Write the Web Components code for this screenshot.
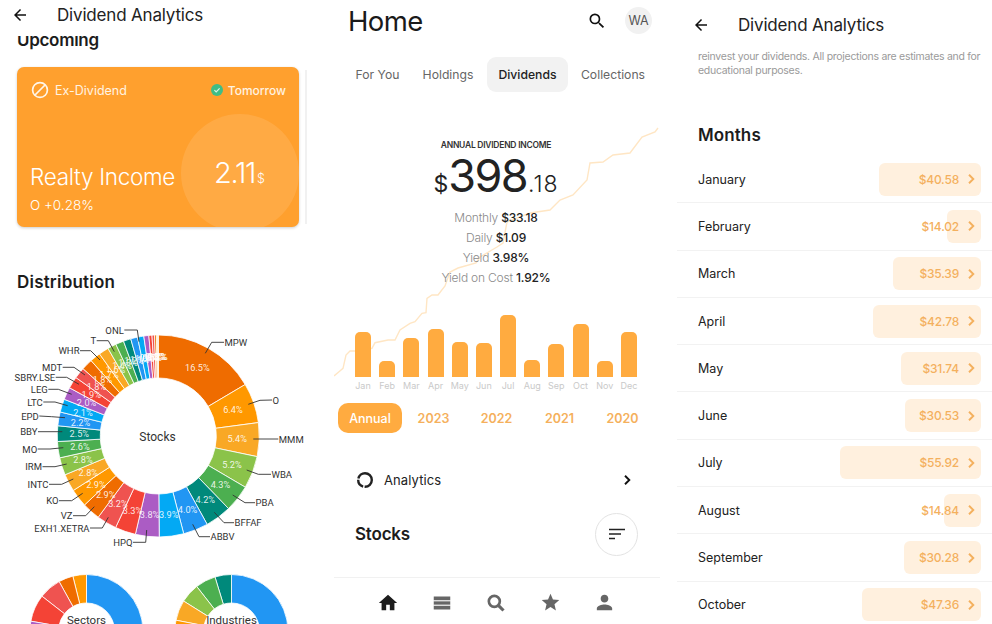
<!DOCTYPE html>
<html lang="en">
<head>
<meta charset="utf-8">
<title>Dividend Analytics</title>
<style>
  html, body { margin: 0; background: #fff; }
  body { font-family: Inter, "Noto Sans", sans-serif; color: #1c1c1c; width: 992px; height: 624px; overflow: hidden; }
  #screens { display: grid; grid-template-columns: 334px 343px 315px; height: 624px; }
</style>
</head>
<body>
<div id="screens">
  <phone-screen>
    <top-bar title="Dividend Analytics" pad="11" gap="28" height="36" drop="6"></top-bar>
    <scroll-clip offset="-4" height="588">
      <section-title style="--x:17px; --y:0px">Upcoming</section-title>
      <upcoming-card></upcoming-card>
      <section-title style="--x:17px; --y:47px; --ls:.2px">Distribution</section-title>
      <stock-donut></stock-donut>
      <mini-donuts></mini-donuts>
    </scroll-clip>
  </phone-screen>

  <phone-screen>
    <home-header></home-header>
    <home-tabs></home-tabs>
    <income-panel></income-panel>
    <year-tabs></year-tabs>
    <analytics-row></analytics-row>
    <stocks-header></stocks-header>
    <bottom-nav></bottom-nav>
  </phone-screen>

  <phone-screen>
    <top-bar title="Dividend Analytics" pad="15" gap="28" height="46" offset="4"></top-bar>
    <months-panel></months-panel>
  </phone-screen>
</div>

<script>
/**
 * Shared icons
 */
const ICONS = {
  back: '<path d="M20 11H7.83l5.59-5.59L12 4l-8 8 8 8 1.41-1.41L7.83 13H20v-2z"/>',
  search: '<path d="M15.5 14h-.79l-.28-.27A6.47 6.47 0 0 0 16 9.5 6.5 6.5 0 1 0 9.5 16c1.61 0 3.09-.59 4.23-1.57l.27.28v.79l5 4.99L20.49 19l-4.99-5zm-6 0C7.01 14 5 11.99 5 9.5S7.01 5 9.5 5 14 7.01 14 9.5 11.99 14 9.5 14z"/>',
  searchBold: '<circle cx="10" cy="10" r="6.6" fill="none" stroke="#666" stroke-width="3.2"/><path d="M14.8 14.8 21 21" fill="none" stroke="#666" stroke-width="3.8"/>',
  home: '<path d="M10 20v-6h4v6h5v-8h3L12 3 2 12h3v8z"/>',
  star: '<path d="M12 17.27L18.18 21l-1.64-7.03L22 9.24l-7.19-.61L12 2 9.19 8.63 2 9.24l5.46 4.73L5.82 21z"/>',
  person: '<path d="M12 12c2.21 0 4-1.79 4-4s-1.79-4-4-4-4 1.79-4 4 1.79 4 4 4zm0 2c-2.67 0-8 1.34-8 4v2h16v-2c0-2.66-5.33-4-8-4z"/>',
  rows: '<path d="M3 5h18v4H3zM3 10h18v4H3zM3 15h18v4H3z"/><path d="M3 9.5h18M3 14.5h18" stroke="#ddd"/>'
};

function icon(name, size, color) {
  return `<svg width="${size}" height="${size}" viewBox="0 0 24 24" fill="${color}" style="display:block">${ICONS[name]}</svg>`;
}

function chevron(color, size) {
  return `<svg width="${size}" height="${size}" viewBox="0 0 12 12" fill="none" stroke="${color}" stroke-width="1.9" style="display:block"><path d="M4 1.8 8.3 6 4 10.2"/></svg>`;
}

/**
 * Layout helpers
 */
class PhoneScreen extends HTMLElement {
  constructor() {
    super();
    this.attachShadow({ mode: 'open' });
    this.shadowRoot.innerHTML = `
      <style>:host { display: block; height: 624px; overflow: hidden; position: relative; background: #fff; }</style>
      <slot></slot>`;
  }
}

class ScrollClip extends HTMLElement {
  connectedCallback() {
    const root = this.attachShadow({ mode: 'open' });
    root.innerHTML = `
      <style>
        :host { display: block; overflow: hidden; height: ${this.getAttribute('height')}px; }
        div { margin-top: ${this.getAttribute('offset')}px; }
      </style>
      <div><slot></slot></div>`;
  }
}

class TopBar extends HTMLElement {
  connectedCallback() {
    const pad = this.getAttribute('pad');
    const gap = this.getAttribute('gap');
    const height = this.getAttribute('height');
    const offset = this.getAttribute('offset') || 0;
    const drop = this.getAttribute('drop') || 0;
    const root = this.attachShadow({ mode: 'open' });
    root.innerHTML = `
      <style>
        :host { display: flex; align-items: center; height: ${height}px; padding: ${offset}px 0 ${drop}px ${pad}px; box-sizing: border-box; gap: ${gap}px; }
        span { font-size: 17px; font-weight: 400; color: #222; letter-spacing: -.18px; }
      </style>
      ${icon('back', 18, '#111')}
      <span>${this.getAttribute('title')}</span>`;
  }
}

class SectionTitle extends HTMLElement {
  constructor() {
    super();
    this.attachShadow({ mode: 'open' });
    this.shadowRoot.innerHTML = `
      <style>
        :host { display: block; padding: var(--y) 0 0 var(--x); font-size: 17px; font-weight: 600; line-height: 16px; color: #1c1c1c; letter-spacing: var(--ls, -.3px); }
      </style>
      <slot></slot>`;
  }
}

/**
 * First screen
 */
class UpcomingCard extends HTMLElement {
  constructor() {
    super();
    this.attachShadow({ mode: 'open' });
    this.shadowRoot.innerHTML = `
      <style>
        :host { display: block; margin: 19px 0 0 17px; width: 289px; height: 160px; position: relative; }
        .card { position: relative; width: 282px; height: 160px; border-radius: 7px; background: #ffa02e; color: #fff; overflow: hidden; box-shadow: 0 1px 3px rgba(0,0,0,.2); }
        .next { position: absolute; left: 288px; top: 3px; width: 2px; height: 154px; background: #f1f1f1; }
        .bubble { position: absolute; left: 164px; top: 47px; width: 118px; height: 118px; border-radius: 50%; background: rgba(255,255,255,.11); }
        .head { position: relative; display: flex; align-items: center; justify-content: space-between; padding: 12px 13px 0 14px; font-size: 12.5px; color: #fff3e2; height: 22px; }
        .left, .right { display: flex; align-items: center; }
        .left { gap: 6px; }
        .right { gap: 5px; font-weight: 500; font-size: 12px; }
        .name { position: absolute; left: 13px; top: 96px; font-size: 22.5px; font-weight: 300; letter-spacing: -.3px; }
        .ticker { position: absolute; left: 13px; top: 130px; font-size: 13.5px; font-weight: 300; }
        .value { position: absolute; left: 197px; top: 88px; font-size: 29px; font-weight: 300; letter-spacing: -1.3px; }
        .value small { font-size: 12.5px; letter-spacing: 0; margin-left: 2px; }
      </style>
      <div class="card">
        <div class="bubble"></div>
        <div class="head">
          <div class="left">
            <svg width="18" height="18" viewBox="0 0 18 18" fill="none" stroke="#fff6ea" stroke-width="1.7"><circle cx="9" cy="9" r="7.4"/><path d="M4 14 14 4"/></svg>
            <span>Ex-Dividend</span>
          </div>
          <div class="right">
            <svg width="12" height="12" viewBox="0 0 12 12"><circle cx="6" cy="6" r="6" fill="#3fbd86"/><path d="M3.4 6.2 5.2 8l3.4-3.6" fill="none" stroke="#d8f5e6" stroke-width="1.2"/></svg>
            <span>Tomorrow</span>
          </div>
        </div>
        <div class="name">Realty Income</div>
        <div class="ticker">O +0.28%</div>
        <div class="value">2.11<small>$</small></div>
      </div>
      <div class="next"></div>`;
  }
}

const SLICE_COLORS = ['#ef6c00', '#ff9800', '#f9a825', '#8bc34a', '#4caf50', '#00897b', '#2196f3', '#03a9f4', '#ab5cc4', '#f44336', '#ef5350'];
const STOCK_SLICES = [16.5, 6.4, 5.4, 5.2, 4.3, 4.2, 4.0, 3.9, 3.8, 3.3, 3.2, 2.9, 2.9, 2.8, 2.8, 2.6, 2.5, 2.2, 2.1, 2.0, 1.9, 1.8, 1.8, 1.7, 1.6, 1.4, 1.3, 1.2, 1.1, 1.0, 0.8, 0.5, 0.4, 0.3, 0.2, 0.1];

// name, anchor side, then the leader polyline as page coordinates
const STOCK_LABELS = [
  ['MPW', 'start', [[205.3, 353.3], [211.7, 342.3], [224, 342.3]]],
  ['O', 'start', [[248.3, 404.3], [260, 400.3], [272, 400]]],
  ['MMM', 'start', [[253.3, 439], [278.3, 439]]],
  ['WBA', 'start', [[246.7, 470], [258.3, 474.3], [271, 474.3]]],
  ['PBA', 'start', [[232.7, 495], [245, 502.7], [255, 502.7]]],
  ['BFFAF', 'start', [[214.3, 512.3], [224, 522.7], [234, 522.7]]],
  ['ABBV', 'start', [[192.7, 524.3], [199, 536.7], [210, 536.7]]],
  ['HPQ', 'end', [[146.7, 530], [145.7, 542.3], [133, 542.3]]],
  ['EXH1.XETRA', 'end', [[108.3, 517.3], [102.3, 528], [90, 528]]],
  ['VZ', 'end', [[94.3, 506.7], [85.7, 515.7], [73, 515.7]]],
  ['KO', 'end', [[82.7, 493.3], [71.7, 500.7], [59, 500.7]]],
  ['INTC', 'end', [[73.3, 479], [61.7, 484.3], [49, 484.3]]],
  ['IRM', 'end', [[66.7, 464], [55, 466.7], [42.5, 466.7]]],
  ['MO', 'end', [[63.3, 447.7], [50, 449], [37.7, 449]]],
  ['BBY', 'end', [[62.3, 431.7], [38, 431.7]]],
  ['EPD', 'end', [[65, 417.7], [51.7, 416.7], [39.3, 416]]],
  ['LTC', 'end', [[67.7, 405.7], [55, 402], [43.3, 402]]],
  ['LEG', 'end', [[71.7, 394.3], [58.3, 389.3], [48.3, 389.3]]],
  ['SBRY.LSE', 'end', [[79, 384.3], [66.7, 377.3], [55.7, 377.3]]],
  ['MDT', 'end', [[85, 375], [74, 367.3], [62.7, 367.3]]],
  ['WHR', 'end', [[100, 360], [90.7, 350.7], [80, 350.7]]],
  ['T', 'end', [[114.3, 351.7], [108.3, 340.7], [96.7, 340.7]]],
  ['ONL', 'end', [[139, 341.7], [137.3, 330], [124.3, 330]]]
];

function ringSlice(cx, cy, outer, inner, fromDeg, toDeg) {
  const p = (r, deg) => {
    const a = deg * Math.PI / 180;
    return `${(cx + r * Math.sin(a)).toFixed(2)} ${(cy - r * Math.cos(a)).toFixed(2)}`;
  };
  const large = toDeg - fromDeg > 180 ? 1 : 0;
  return `M${p(outer, fromDeg)}A${outer} ${outer} 0 ${large} 1 ${p(outer, toDeg)}L${p(inner, toDeg)}A${inner} ${inner} 0 ${large} 0 ${p(inner, fromDeg)}Z`;
}

class StockDonut extends HTMLElement {
  constructor() {
    super();
    this.attachShadow({ mode: 'open' });
    const cx = 158.3, cy = 436, outer = 101, inner = 58;
    let start = 0, paths = '', texts = '';
    const total = STOCK_SLICES.reduce((a, b) => a + b, 0);
    STOCK_SLICES.forEach((pct, i) => {
      const end = start + pct / total * 360;
      const mid = (start + end) / 2 * Math.PI / 180;
      paths += `<path d="${ringSlice(cx, cy, outer, inner, start, end)}" fill="${SLICE_COLORS[i % SLICE_COLORS.length]}" stroke="#fff" stroke-width=".8"/>`;
      texts += `<text x="${(cx + 79 * Math.sin(mid)).toFixed(1)}" y="${(cy - 79 * Math.cos(mid) + 3.3).toFixed(1)}" text-anchor="middle" class="pct">${pct.toFixed(1)}%</text>`;
      start = end;
    });
    const labels = STOCK_LABELS.map(([name, side, pts]) => {
      const last = pts[pts.length - 1];
      const x = side === 'start' ? last[0] + 0.5 : last[0] - 0.5;
      return `<polyline points="${pts.map(p => p.join(',')).join(' ')}" fill="none" stroke="#333" stroke-width=".9"/>
        <text x="${x}" y="${last[1] + 3.5}" text-anchor="${side}" class="name">${name}</text>`;
    }).join('');
    this.shadowRoot.innerHTML = `
      <style>
        :host { display: block; height: 243px; margin-top: 32px; }
        svg { display: block; }
        text { font-family: Roboto, sans-serif; }
        .pct { font-size: 9.2px; fill: #fff; fill-opacity: .88; }
        .name { font-size: 9.5px; fill: #333; }
        .center { font-size: 12px; fill: #333; }
      </style>
      <svg width="334" height="243" viewBox="0 322 334 243">
        ${paths}${texts}${labels}
        <text x="157.5" y="440.5" text-anchor="middle" class="center">Stocks</text>
      </svg>`;
  }
}

class MiniDonut extends HTMLElement {
  connectedCallback() {
    // slices run anticlockwise from twelve o'clock, "colour:degrees"
    const left = this.getAttribute('left').split(',').map(s => s.split(':'));
    const cx = 72.5, cy = 57, outer = 56.5, inner = 28;
    let paths = `<path d="${ringSlice(cx, cy, outer, inner, 0, 180)}" fill="#2196f3" stroke="#fff" stroke-width=".8"/>`;
    let from = 360;
    left.forEach(([color, deg]) => {
      const to = from - Number(deg);
      paths += `<path d="${ringSlice(cx, cy, outer, inner, to, from)}" fill="${color}" stroke="#fff" stroke-width=".8"/>`;
      from = to;
    });
    const root = this.attachShadow({ mode: 'open' });
    root.innerHTML = `
      <style>
        :host { display: block; width: 145px; height: 70px; }
        svg { display: block; }
        text { font-family: Roboto, sans-serif; font-size: 11.5px; fill: #333; }
      </style>
      <svg width="145" height="70" viewBox="0 0 145 70">
        ${paths}
        <text x="72.5" y="50" text-anchor="middle">${this.getAttribute('label')}</text>
      </svg>`;
  }
}

class MiniDonuts extends HTMLElement {
  constructor() {
    super();
    this.attachShadow({ mode: 'open' });
    this.shadowRoot.innerHTML = `
      <style>:host { display: flex; padding: 9px 0 0 13.5px; }</style>
      <mini-donut label="Sectors" left="#ff9800:14,#ef6c00:15,#ef5350:23,#f44336:28,#ab5cc4:6,#03a9f4:94"></mini-donut>
      <mini-donut label="Industries" left="#00897b:17,#4caf50:21,#8bc34a:20,#f9a825:21,#ff9800:5,#ef6c00:96"></mini-donut>`;
  }
}

/**
 * Home screen
 */
class HomeHeader extends HTMLElement {
  constructor() {
    super();
    this.attachShadow({ mode: 'open' });
    this.shadowRoot.innerHTML = `
      <style>
        :host { display: flex; align-items: center; height: 41px; padding: 0 25px 0 14px; }
        h1 { margin: 0; flex: 1; font-size: 27.5px; font-weight: 400; color: #1a1a1a; letter-spacing: -.6px; }
        .search { margin-right: 18px; }
        .avatar { width: 27px; height: 27px; border-radius: 50%; background: #f1f1f1; color: #555; font-size: 12.5px; display: flex; align-items: center; justify-content: center; }
      </style>
      <h1>Home</h1>
      <div class="search">${icon('search', 20, '#111')}</div>
      <div class="avatar">WA</div>`;
  }
}

class HomeTabs extends HTMLElement {
  constructor() {
    super();
    this.attachShadow({ mode: 'open' });
    this.shadowRoot.innerHTML = `
      <style>
        :host { display: grid; grid-template-columns: 63px 78px 81px 90px; margin-top: 16px; padding-left: 12px; height: 35px; font-size: 12.2px; color: #666; }
        div { display: flex; align-items: center; justify-content: center; white-space: nowrap; }
        .on { background: #f2f2f2; border-radius: 9px; color: #222; font-weight: 500; }
      </style>
      <div>For You</div>
      <div>Holdings</div>
      <div class="on">Dividends</div>
      <div>Collections</div>`;
  }
}

const BARS = [
  ['Jan', 45], ['Feb', 16], ['Mar', 39.5], ['Apr', 48], ['May', 35], ['Jun', 34.5],
  ['Jul', 62.5], ['Aug', 17], ['Sep', 33.5], ['Oct', 53], ['Nov', 16], ['Dec', 45]
];

const TREND = '0,376 5,371.7 9,368.3 12,355 16,351 21,351 38,348.3 41,342.7 54,340 61,340 66,330 76,323.3 81,321.7 88,313.3 92,312.7 93,298.3 98,295 104,295 111,286 116,272 124,268 142,263 146,257 163,247 169,243 173,222 196,213 216,210 226,200 239,195 253,180 256,163 269,162 279,155 296,153 308,137 321,132 324,128';

class IncomePanel extends HTMLElement {
  constructor() {
    super();
    this.attachShadow({ mode: 'open' });
    const bars = BARS.map(([m, h]) => `
      <div class="col"><div class="bar" style="height:${h}px"></div><span>${m}</span></div>`).join('');
    this.shadowRoot.innerHTML = `
      <style>
        :host { display: block; position: relative; height: 311px; }
        .trend { position: absolute; left: 0; top: -92px; width: 326px; height: 400px; pointer-events: none; }
        .summary { position: relative; padding-top: 48px; text-align: center; width: 324px; }
        .cap { font-size: 8.5px; font-weight: 600; color: #333; letter-spacing: -.25px; line-height: 10px; }
        .big { display: flex; justify-content: center; align-items: baseline; height: 50px; margin-top: 1px; color: #222; line-height: 50px; }
        .big b { font-size: 45px; font-weight: 400; letter-spacing: -1.6px; }
        .big i { font-style: normal; font-size: 23px; font-weight: 300; }
        .big .cents { letter-spacing: 1px; margin-left: 1px; }
        .line { font-size: 12px; line-height: 20px; color: #8a8a8a; font-weight: 300; letter-spacing: -.2px; }
        .line b { font-weight: 500; color: #222; }
        .lines { margin-top: 7px; }
        .chart { position: absolute; left: 21px; top: 169px; width: 282px; height: 131px; display: flex; justify-content: space-between; align-items: flex-end; }
        .col { width: 16px; display: flex; flex-direction: column; align-items: center; }
        .bar { width: 16px; background: #ffab40; border-radius: 5px 5px 0 0; }
        .col span { width: 24px; text-align: center; font-size: 9px; color: #c9c9c9; line-height: 12px; margin-top: 3px; }
      </style>
      <svg class="trend" viewBox="0 0 326 400"><polyline points="${TREND}" fill="none" stroke="#ffe6c4" stroke-width="1.4"/></svg>
      <div class="summary">
        <div class="cap">ANNUAL DIVIDEND INCOME</div>
        <div class="big"><i style="font-weight:400">$</i><b>398</b><i class="cents">.18</i></div>
        <div class="lines">
          <div class="line">Monthly <b>$33.18</b></div>
          <div class="line">Daily <b>$1.09</b></div>
          <div class="line">Yield <b>3.98%</b></div>
          <div class="line">Yield on Cost <b>1.92%</b></div>
        </div>
      </div>
      <div class="chart">${bars}</div>`;
  }
}

class YearTabs extends HTMLElement {
  constructor() {
    super();
    this.attachShadow({ mode: 'open' });
    this.shadowRoot.innerHTML = `
      <style>
        :host { display: grid; grid-template-columns: 64px 63px 63px 63px 63px; height: 30px; margin-left: 4px; font-size: 12.5px; font-weight: 600; color: #f5b05c; }
        div { display: flex; align-items: center; justify-content: center; }
        .on { background: #ffab40; color: #fff; border-radius: 10px; font-weight: 500; }
      </style>
      <div class="on">Annual</div><div>2023</div><div>2022</div><div>2021</div><div>2020</div>`;
  }
}

class AnalyticsRow extends HTMLElement {
  constructor() {
    super();
    this.attachShadow({ mode: 'open' });
    this.shadowRoot.innerHTML = `
      <style>
        :host { display: flex; align-items: center; height: 40px; margin-top: 27px; padding: 0 44px 0 22px; font-size: 13px; color: #222; letter-spacing: .1px; }
        span { flex: 1; margin-left: 10px; }
      </style>
      <svg width="18" height="18" viewBox="0 0 18 18" fill="none" stroke="#222" stroke-width="2.4"><circle cx="9" cy="9" r="6.8" stroke-dasharray="11 1.5 9 1.2 20 1"/></svg>
      <span>Analytics</span>
      ${chevron('#111', 12)}`;
  }
}

class StocksHeader extends HTMLElement {
  constructor() {
    super();
    this.attachShadow({ mode: 'open' });
    this.shadowRoot.innerHTML = `
      <style>
        :host { display: flex; align-items: center; justify-content: space-between; height: 42px; margin-top: 13px; padding: 0 22px 0 21px; width: 283px; font-size: 17px; font-weight: 600; color: #1c1c1c; letter-spacing: -.2px; }
        .round { width: 41px; height: 41px; border: 1px solid #e3e3e3; border-radius: 50%; display: flex; align-items: center; justify-content: center; }
      </style>
      <span>Stocks</span>
      <div class="round">
        <svg width="16" height="12" viewBox="0 0 16 12" stroke="#222" stroke-width="1.4"><path d="M0 1.5h16M0 6h12M0 10.5h6"/></svg>
      </div>`;
  }
}

class BottomNav extends HTMLElement {
  constructor() {
    super();
    this.attachShadow({ mode: 'open' });
    this.shadowRoot.innerHTML = `
      <style>
        :host { display: grid; grid-template-columns: repeat(5, 54px); justify-content: start; height: 47px; width: 326px; margin-top: 22px; padding: 3px 0 0 27px; box-sizing: border-box; border-top: 1px solid #f1f1f1; }
        div { display: flex; align-items: center; justify-content: center; }
      </style>
      <div>${icon('home', 22, '#1d1d1d')}</div>
      <div>${icon('rows', 22, '#666')}</div>
      <div>${icon('searchBold', 20, '#666')}</div>
      <div>${icon('star', 21, '#666')}</div>
      <div>${icon('person', 23, '#666')}</div>`;
  }
}

/**
 * Months screen
 */
class MonthRow extends HTMLElement {
  connectedCallback() {
    const root = this.attachShadow({ mode: 'open' });
    root.innerHTML = `
      <style>
        :host { display: flex; align-items: center; justify-content: space-between; height: 47.3px; box-sizing: border-box; padding: 0 11px 0 21px; border-bottom: 1px solid #f2f2f2; font-size: 12.5px; color: #222; }
        .amount { display: flex; align-items: center; gap: 6px; position: relative; color: #f4b05e; font-weight: 500; font-size: 12px; letter-spacing: -.2px; height: 33px; padding-right: 4px; }
        .pill { position: absolute; right: 0; top: 0; height: 33px; border-radius: 6px; background: #fff0de; width: ${this.getAttribute('bar')}px; }
        .amount span, .amount svg { position: relative; }
      </style>
      <span>${this.getAttribute('name')}</span>
      <div class="amount">
        <div class="pill"></div>
        <span>${this.getAttribute('value')}</span>
        ${chevron('#f4b05e', 12)}
      </div>`;
  }
}

const MONTHS = [
  ['January', '$40.58', 102], ['February', '$14.02', 34], ['March', '$35.39', 88],
  ['April', '$42.78', 108], ['May', '$31.74', 80], ['June', '$30.53', 76],
  ['July', '$55.92', 141], ['August', '$14.84', 37], ['September', '$30.28', 77],
  ['October', '$47.36', 119]
];

class MonthsPanel extends HTMLElement {
  constructor() {
    super();
    this.attachShadow({ mode: 'open' });
    const rows = MONTHS.map(([n, v, b]) => `<month-row name="${n}" value="${v}" bar="${b}"></month-row>`).join('');
    this.shadowRoot.innerHTML = `
      <style>
        :host { display: block; }
        p { margin: 4px 0 0; padding: 0 0 0 21px; font-size: 10.5px; line-height: 14px; color: #9a9a9a; letter-spacing: -.28px; white-space: nowrap; }
        h2 { margin: 47px 0 11px 21px; font-size: 17px; line-height: 20px; font-weight: 600; color: #1c1c1c; letter-spacing: .1px; }
      </style>
      <p>reinvest your dividends. All projections are estimates and for<br>educational purposes.</p>
      <h2>Months</h2>
      ${rows}`;
  }
}

customElements.define('phone-screen', PhoneScreen);
customElements.define('scroll-clip', ScrollClip);
customElements.define('top-bar', TopBar);
customElements.define('section-title', SectionTitle);
customElements.define('upcoming-card', UpcomingCard);
customElements.define('stock-donut', StockDonut);
customElements.define('mini-donut', MiniDonut);
customElements.define('mini-donuts', MiniDonuts);
customElements.define('home-header', HomeHeader);
customElements.define('home-tabs', HomeTabs);
customElements.define('income-panel', IncomePanel);
customElements.define('year-tabs', YearTabs);
customElements.define('analytics-row', AnalyticsRow);
customElements.define('stocks-header', StocksHeader);
customElements.define('bottom-nav', BottomNav);
customElements.define('month-row', MonthRow);
customElements.define('months-panel', MonthsPanel);
</script>
</body>
</html>
